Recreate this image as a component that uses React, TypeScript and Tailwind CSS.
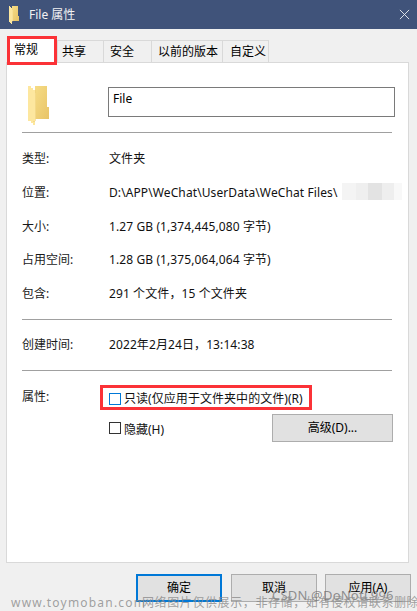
const font = { fontFamily: '"Noto Sans", "Noto Sans CJK SC", sans-serif' };

function Folder({ small }: { small?: boolean }) {
  return (
    <svg viewBox="0 0 22 40" className={small ? "w-[10px] h-[18px]" : "w-[22px] h-[40px]"} shapeRendering="crispEdges">
      <defs>
        <linearGradient id={small ? "fa" : "fb"} x1="0" y1="0" x2="1" y2="1">
          <stop offset="0" stopColor="#f6dc85" />
          <stop offset="1" stopColor="#e8c468" />
        </linearGradient>
      </defs>
      <path d="M7 1H19V22H21V34H7Z" fill={`url(#${small ? "fa" : "fb"})`} />
      <path d="M1 1H3V3H5V5H7V8H8V34H7V40H5V38H3V36H0V1Z" fill="#fde79f" />
      <path d="M7 5V36H5" fill="none" stroke="#eed07c" strokeWidth="0.6" />
    </svg>
  );
}

function Tab({ label, cls }: { label: string; cls: string }) {
  return (
    <div className={`${cls} h-[22px] border border-b-0 border-[#d9d9d9] -ml-px flex items-center text-[12px] text-black`}>
      {label}
    </div>
  );
}

function Row({ label, children, cls }: { label: string; children: React.ReactNode; cls: string }) {
  return (
    <div className={`flex items-center h-[18px] ${cls}`}>
      <div className="w-[87px] text-[12px] text-[#1a1a1a]">{label}</div>
      <div className="text-[12px] tracking-[0.1px] text-[#111] whitespace-nowrap">{children}</div>
    </div>
  );
}

function Btn({ label, primary }: { label: string; primary?: boolean }) {
  return (
    <div
      className={`h-[28px] bg-[#e1e1e1] flex items-center justify-center text-[12px] text-black ${
        primary ? "w-[86px] mr-[1px] border-2 border-[#0078d7]" : "w-[86px] border border-[#adadad]"
      }`}
    >
      {label}
    </div>
  );
}

export default function App() {
  return (
    <div className="relative w-[417px] h-[611px] overflow-hidden bg-[#f0f0f0]" style={font}>
      <div className="h-[29px] bg-[#40537a] flex items-center pl-[9px] pr-[7px]">
        <Folder small />
        <span className="ml-[10px] text-[12px] text-[#f2f2f2]">File 属性</span>
        <svg viewBox="0 0 12 12" className="ml-auto w-[11px] h-[11px]" fill="none" stroke="#e8ecf2" strokeWidth="1">
          <path d="M1 1L11 11M11 1L1 11" />
        </svg>
      </div>

      <div className="flex h-[22px] mt-[11px] pl-[7px]">
        <div className="w-[51px] h-[22px]" />
        <Tab label="共享" cls="w-[47px] pl-[4px]" />
        <Tab label="安全" cls="w-[49px] pl-[6px]" />
        <Tab label="以前的版本" cls="w-[72px] pl-[6px]" />
        <Tab label="自定义" cls="w-[47px] pl-[7px]" />
      </div>

      <div className="ml-[6px] w-[403px] h-[501px] bg-white border border-[#d9d9d9] pl-[15px] pr-[16px]">
        <div className="flex pt-[24px] h-[70px] border-b border-[#a0a0a0] w-[370px]">
          <div className="w-[86px] shrink-0 pl-[6px] -mt-[2px]">
            <Folder />
          </div>
          <div className="w-[287px] h-[30px] shrink-0 border border-[#7a7a7a] px-[4px] pt-[2px] text-[12px] text-black">File</div>
        </div>

        <Row label="类型:" cls="mt-[17px]">文件夹</Row>
        <Row label="位置:" cls="mt-[16px]">D:\APP\WeChat\UserData\WeChat Files\</Row>
        <Row label="大小:" cls="mt-[16px]">1.27 GB (1,374,445,080 字节)</Row>
        <Row label="占用空间:" cls="mt-[15px]">1.28 GB (1,375,064,064 字节)</Row>
        <Row label="包含:" cls="mt-[16px]">291 个文件，15 个文件夹</Row>

        <div className="mt-[16px] border-t border-[#a0a0a0] w-[370px]" />
        <Row label="创建时间:" cls="mt-[16px]">2022年2月24日，13:14:38</Row>
        <div className="mt-[16px] border-t border-[#a0a0a0] w-[370px]" />

        <div className="flex mt-[17px]">
          <div className="w-[87px] text-[12px] text-[#1a1a1a] h-[18px] leading-[18px]">属性:</div>
          <div className="flex-1">
            <div className="flex items-center h-[18px] mt-[2px]">
              <div className="w-[12px] h-[12px] border border-[#0078d7] bg-white" />
              <span className="ml-[3px] text-[12px] tracking-[0.05px] text-[#111] whitespace-nowrap">只读(仅应用于文件夹中的文件)(R)</span>
            </div>
            <div className="flex mt-[6px]">
              <div className="flex items-start pt-[8px]">
                <div className="w-[12px] h-[12px] border border-[#333] bg-white" />
                <span className="ml-[3px] text-[12px] text-[#111] leading-[15px]">隐藏(H)</span>
              </div>
              <div className="ml-auto mr-[-1px] w-[121px] h-[28px] bg-[#e1e1e1] border border-[#adadad] flex items-center justify-center text-[12px] text-black">
                高级(D)...
              </div>
            </div>
          </div>
        </div>
      </div>

      <div className="flex justify-end gap-[8px] pr-[6px] mt-[11px]">
        <Btn label="确定" primary />
        <Btn label="取消" />
        <Btn label="应用(A)" />
      </div>

      {/* selected tab with red annotation */}
      <div className="absolute left-[7px] top-[36px] w-[50px] h-[29px] bg-white border-[3px] border-[#fb3237] pl-[4px] text-[12px] text-black leading-[22px]">
        常规
      </div>
      {/* red annotation */}
      <div className="absolute left-[100px] top-[385px] w-[212px] h-[25px] border-[3px] border-[#fb3237]" />
      {/* blurred path */}
      <div className="absolute left-[342px] top-[183px] w-[60px] h-[17px] flex">
        <div className="w-[14px] bg-[#f4f4f4]" />
        <div className="w-[12px] bg-[#efefef]" />
        <div className="w-[14px] bg-[#e3e3e3]" />
        <div className="w-[12px] bg-[#eeeeee]" />
        <div className="w-[8px] bg-[#f8f8f8]" />
      </div>
      {/* watermarks */}
      <div className="absolute left-[272px] top-[586px] text-[13px] tracking-[0.2px] text-[#666]/70 whitespace-nowrap">CSDN @DoNotL996</div>
      <div className="absolute left-[11px] top-[594px] flex text-[12px] text-[#8a8a8a]/80 whitespace-nowrap">
        <span className="w-[131px] tracking-[1.2px]">www.toymoban.com</span>
        <span className="tracking-[0.6px]">网络图片仅供展示，非存储，如有侵权请联系删除。</span>
      </div>
    </div>
  );
}
